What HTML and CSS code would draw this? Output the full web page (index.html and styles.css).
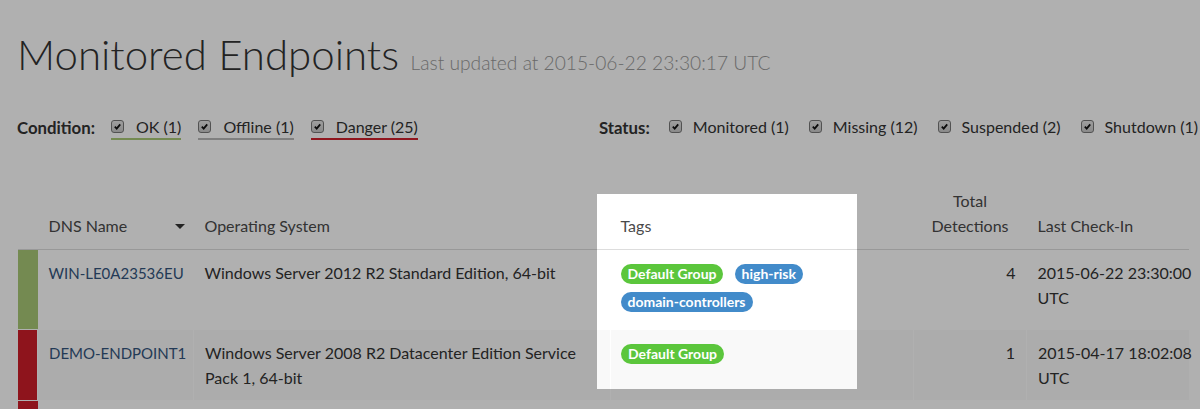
FILE: index.html
```html
<!DOCTYPE html>
<html>
<head>
<meta charset="utf-8">
<title>Monitored Endpoints</title>
<link rel="stylesheet" href="styles.css">
</head>
<body>
<div class="page">
  <h1 class="title">Monitored Endpoints <small>Last updated at 2015-06-22 23:30:17 UTC</small></h1>

  <div class="filters">
    <div class="group">
      <span class="group-label">Condition:</span>
      <label class="opt opt-ok"><span class="cb"><svg viewBox="0 0 10 10"><path d="M2 5.2 L4.1 7.3 L8 2.6"/></svg></span>OK (1)</label>
      <label class="opt opt-offline"><span class="cb"><svg viewBox="0 0 10 10"><path d="M2 5.2 L4.1 7.3 L8 2.6"/></svg></span>Offline (1)</label>
      <label class="opt opt-danger"><span class="cb"><svg viewBox="0 0 10 10"><path d="M2 5.2 L4.1 7.3 L8 2.6"/></svg></span>Danger (25)</label>
    </div>
    <div class="group group-status">
      <span class="group-label">Status:</span>
      <label class="opt"><span class="cb"><svg viewBox="0 0 10 10"><path d="M2 5.2 L4.1 7.3 L8 2.6"/></svg></span>Monitored (1)</label>
      <label class="opt"><span class="cb"><svg viewBox="0 0 10 10"><path d="M2 5.2 L4.1 7.3 L8 2.6"/></svg></span>Missing (12)</label>
      <label class="opt"><span class="cb"><svg viewBox="0 0 10 10"><path d="M2 5.2 L4.1 7.3 L8 2.6"/></svg></span>Suspended (2)</label>
      <label class="opt"><span class="cb"><svg viewBox="0 0 10 10"><path d="M2 5.2 L4.1 7.3 L8 2.6"/></svg></span>Shutdown (1)</label>
    </div>
  </div>

  <table class="endpoints">
    <colgroup>
      <col class="c-bar"><col class="c-dns"><col class="c-os"><col class="c-tags"><col class="c-det"><col class="c-last">
    </colgroup>
    <thead>
      <tr>
        <th class="bar"></th>
        <th class="dns">DNS Name <span class="caret"></span></th>
        <th>Operating System</th>
        <th class="tags-head">Tags</th>
        <th class="num">Total<br>Detections</th>
        <th>Last Check-In</th>
      </tr>
    </thead>
    <tbody>
      <tr class="first">
        <td class="bar bar-ok"></td>
        <td class="dns"><a href="#">WIN-LE0A23536EU</a></td>
        <td>Windows Server 2012 R2 Standard Edition, 64-bit</td>
        <td class="tags"><span class="tag tag-green">Default Group</span> <span class="tag tag-blue">high-risk</span> <span class="tag tag-blue">domain-controllers</span></td>
        <td class="num">4</td>
        <td><span class="nw">2015-06-22 23:30:00</span> UTC</td>
      </tr>
      <tr class="striped">
        <td class="bar bar-danger"></td>
        <td class="dns"><a href="#">DEMO-ENDPOINT1</a></td>
        <td>Windows Server 2008 R2 Datacenter Edition Service Pack 1, 64-bit</td>
        <td class="tags"><span class="tag tag-green">Default Group</span></td>
        <td class="num">1</td>
        <td><span class="nw">2015-04-17 18:02:08</span> UTC</td>
      </tr>
      <tr class="more">
        <td class="bar bar-danger"></td>
        <td></td>
        <td></td>
        <td></td>
        <td></td>
        <td></td>
      </tr>
    </tbody>
  </table>

  <div class="spotlight"></div>
</div>
</body>
</html>
```

FILE: styles.css
```css
html, body {
  margin: 0;
  padding: 0;
}
body {
  width: 1200px;
  height: 409px;
  overflow: hidden;
  background: #fff;
  color: #333;
  font-family: Lato, "Liberation Sans", sans-serif;
  font-size: 16px;
}
.page {
  position: relative;
  padding: 28px 0 0 17px;
  height: 409px;
  box-sizing: border-box;
}
.title {
  margin: 0;
  font-weight: 300;
  font-size: 42px;
  line-height: 52px;
  color: #333;
  white-space: nowrap;
}
.title small {
  font-size: 19.2px;
  line-height: 1;
  font-weight: 300;
  color: #999;
  margin-left: 0;
}
.filters {
  display: flex;
  align-items: center;
  margin-top: 35px;
  white-space: nowrap;
  line-height: 19px;
}
.group {
  display: flex;
  align-items: center;
  gap: 17px;
}
.group-status {
  margin-left: 181px;
  gap: 20px;
}
.group-label {
  font-weight: 700;
  font-size: 16.8px;
}
.group .group-label {
  margin-right: -1px;
}
.opt {
  display: flex;
  align-items: center;
  gap: 12px;
  padding: 2px 0 2px 0;
  border-bottom: 2px solid transparent;
}
.group-status .opt {
  gap: 11px;
}
.opt-ok { border-bottom-color: #a9c876; }
.opt-offline { border-bottom-color: #b8b8b8; }
.opt-danger { border-bottom-color: #d0202c; }
.cb {
  box-sizing: border-box;
  width: 13px;
  height: 13px;
  border: 1px solid #777;
  border-radius: 3px;
  background: linear-gradient(#e6e6e6, #c8c8c8);
  display: inline-flex;
  align-items: center;
  justify-content: center;
}
.cb svg {
  width: 9px;
  height: 9px;
}
.cb path {
  fill: none;
  stroke: #111;
  stroke-width: 2;
}
.endpoints {
  margin-top: 40px;
  width: 1171px;
  border-collapse: collapse;
  table-layout: fixed;
}
.c-bar { width: 20px; }
.c-dns { width: 156px; }
.c-os { width: 417px; }
.c-tags { width: 303px; }
.c-det { width: 113px; }
.c-last { width: 162px; }
.endpoints th {
  text-align: left;
  font-weight: 400;
  color: #4a4a4a;
  vertical-align: bottom;
  line-height: 25px;
  padding: 8px 10px 11px 11px;
  border-bottom: 1px solid #ddd;
}
.endpoints th.bar, .endpoints td.bar {
  padding: 0;
}
.endpoints th.dns {
  position: relative;
}
.caret {
  position: absolute;
  right: 9px;
  bottom: 20px;
  width: 0;
  height: 0;
  border-left: 5px solid transparent;
  border-right: 5px solid transparent;
  border-top: 5px solid #333;
}
.endpoints th.tags-head {
  padding-left: 10px;
}
.endpoints th.num {
  text-align: center;
  padding: 8px 0 11px 0;
}
.endpoints td {
  vertical-align: top;
  line-height: 25px;
  padding: 10px 10px 10px 11px;
  border-top: 1px solid #fff;
}
.endpoints tr.first td {
  border-top: 0;
}
.endpoints tr.more td {
  height: 40px;
}
.endpoints td.num {
  text-align: right;
  padding-right: 11px;
}
.endpoints td.tags {
  padding-left: 10px;
  line-height: 28px;
  padding-top: 8px;
  padding-bottom: 8px;
}
.endpoints tr.first td.tags {
  padding-bottom: 15px;
}
.striped td {
  background: #f9f9f9;
  border-left: 1px solid #fff;
}
.bar-ok { background: #a9c876 !important; }
.bar-danger { background: #ce1d29 !important; }
.dns a {
  color: #34557d;
  font-size: 15px;
  text-decoration: none;
  white-space: nowrap;
}
.nw { white-space: nowrap; }
.tag {
  display: inline-block;
  vertical-align: middle;
  height: 20px;
  line-height: 20px;
  padding: 0 7px;
  border-radius: 10px;
  color: #fff;
  font-weight: 700;
  font-size: 14px;
  margin-right: 7px;
}
.tag-green { background: #5bc63c; }
.tag-blue { background: #428bca; }
.spotlight {
  position: absolute;
  left: 597px;
  top: 194px;
  width: 260px;
  height: 195px;
  box-shadow: 0 0 0 2400px rgba(0, 0, 0, 0.31);
  pointer-events: none;
}
```
